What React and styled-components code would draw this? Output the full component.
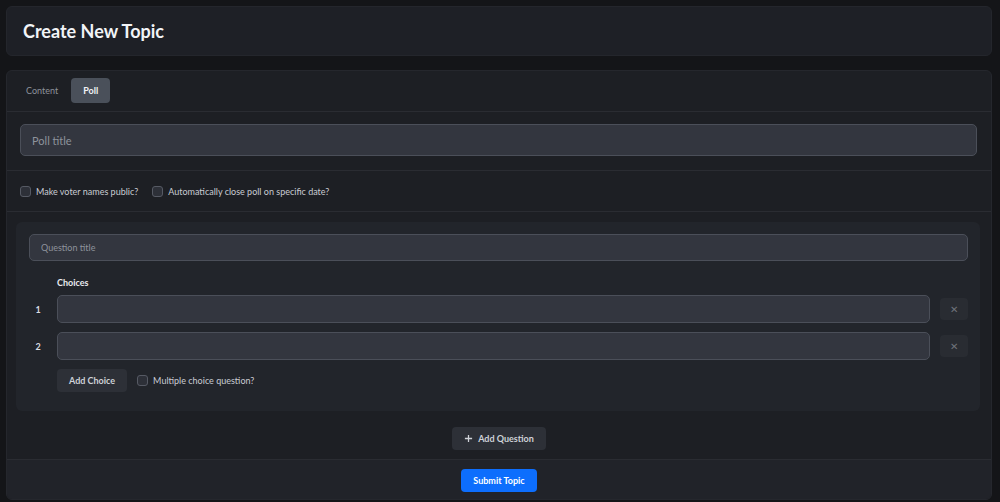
import React from "react";
import styled, { createGlobalStyle } from "styled-components";

const GlobalStyle = createGlobalStyle`
  html, body {
    margin: 0;
    padding: 0;
    background: #141518;
    font-family: "Lato", "Noto Sans", sans-serif;
    color: #e6e8ec;
  }
`;

const Page = styled.div`
  height: 502px;
  box-sizing: border-box;
  padding: 6px 8px 2px 6px;
  display: flex;
  flex-direction: column;
  gap: 14px;
`;

const Header = styled.header`
  height: 50px;
  flex: none;
  box-sizing: border-box;
  display: flex;
  align-items: center;
  padding: 0 16px;
  background: #1e2026;
  border: 1px solid #24262c;
  border-radius: 6px;
`;

const Title = styled.h1`
  margin: 0;
  font-size: 18px;
  font-weight: 700;
  color: #f2f4f7;
`;

const Card = styled.section`
  flex: 1;
  display: flex;
  flex-direction: column;
  background: #1d1f24;
  border: 1px solid #25272d;
  border-radius: 6px;
  overflow: hidden;
`;

const Tabs = styled.div`
  display: flex;
  align-items: center;
  gap: 6px;
  padding: 7px 13px 8px 12px;
  border-bottom: 1px solid #2a2c32;
`;

const Tab = styled.button`
  height: 25px;
  padding: 0 ${(p) => (p.active ? "12px" : "7px")};
  border: none;
  border-radius: 4px;
  font-family: inherit;
  font-size: 9px;
  font-weight: ${(p) => (p.active ? 700 : 400)};
  background: ${(p) => (p.active ? "#4a505a" : "transparent")};
  color: ${(p) => (p.active ? "#f1f3f6" : "#8d929b")};
`;

const Section = styled.div`
  padding: ${(p) => p.pad || "12px 14px 14px 13px"};
  border-bottom: ${(p) => (p.noBorder ? "none" : "1px solid #2a2c32")};
  display: flex;
  flex-direction: column;
  align-items: ${(p) => p.align || "stretch"};
`;

const Input = styled.input`
  box-sizing: border-box;
  width: 100%;
  height: ${(p) => p.h || 32}px;
  padding: 0 11px;
  background: #33363f;
  border: 1px solid #4b4f59;
  border-radius: 5px;
  font-family: inherit;
  font-size: ${(p) => p.fs || 11}px;
  color: #e6e8ec;
  outline: none;
  &::placeholder {
    color: #8e939c;
  }
`;

const CheckRow = styled.div`
  height: 40px;
  display: flex;
  align-items: center;
  gap: 14px;
  padding: 0 13px;
  border-bottom: 1px solid #2a2c32;
`;

const CheckLabel = styled.label`
  display: flex;
  align-items: center;
  gap: 5px;
  font-size: 9px;
  color: #c9ccd3;
`;

const Box = styled.span`
  width: 11px;
  height: 11px;
  box-sizing: border-box;
  border: 1px solid #565a64;
  border-radius: 3px;
  background: #2d3038;
`;

const QuestionArea = styled.div`
  padding: 10px 11px 0 9px;
  flex: none;
`;

const Question = styled.div`
  background: #22252b;
  border-radius: 6px;
  padding: 12px 12px 19px 13px;
  display: flex;
  flex-direction: column;
`;

const Choices = styled.div`
  display: grid;
  grid-template-columns: 18px 1fr 28px;
  column-gap: 10px;
  row-gap: 9px;
  align-items: center;
  margin-top: 16px;
`;

const ChoicesLabel = styled.div`
  grid-column: 2;
  font-size: 9px;
  font-weight: 700;
  color: #e9ebef;
  margin-bottom: -2px;
`;

const Num = styled.div`
  font-size: 9px;
  font-weight: 700;
  color: #d9dce2;
  text-align: center;
  grid-column: 1;
`;

const RemoveBtn = styled.button`
  width: 28px;
  height: 22px;
  border: none;
  border-radius: 4px;
  background: #292c32;
  color: #6f737b;
  font-size: 10px;
  display: flex;
  align-items: center;
  justify-content: center;
  padding: 0;
`;

const ChoiceFooter = styled.div`
  grid-column: 2 / 4;
  display: flex;
  align-items: center;
  gap: 10px;
`;

const GreyBtn = styled.button`
  height: 23px;
  padding: 0 12px;
  border: none;
  border-radius: 4px;
  background: #2d3037;
  color: #cfd2d8;
  font-family: inherit;
  font-size: 9px;
  font-weight: 700;
  display: flex;
  align-items: center;
  gap: 5px;
`;

const Footer = styled.div`
  flex: 1;
  background: #212329;
  display: flex;
  justify-content: center;
  padding-top: 9px;
`;

const SubmitBtn = styled.button`
  height: 23px;
  padding: 0 12px;
  border: none;
  border-radius: 4px;
  background: #0d6efd;
  color: #ffffff;
  font-family: inherit;
  font-size: 9px;
  font-weight: 700;
`;

const PlusIcon = () => (
  <svg width="9" height="9" viewBox="0 0 10 10">
    <path d="M5 1v8M1 5h8" stroke="#cfd2d8" strokeWidth="1.4" />
  </svg>
);

export default function App() {
  return (
    <>
      <GlobalStyle />
      <Page>
        <Header>
          <Title>Create New Topic</Title>
        </Header>
        <Card>
          <Tabs>
            <Tab>Content</Tab>
            <Tab active>Poll</Tab>
          </Tabs>
          <Section>
            <Input placeholder="Poll title" />
          </Section>
          <CheckRow>
            <CheckLabel>
              <Box /> Make voter names public?
            </CheckLabel>
            <CheckLabel>
              <Box /> Automatically close poll on specific date?
            </CheckLabel>
          </CheckRow>
          <QuestionArea>
            <Question>
              <Input h={27} fs={9} placeholder="Question title" />
              <Choices>
                <ChoicesLabel>Choices</ChoicesLabel>
                <Num>1</Num>
                <Input h={28} />
                <RemoveBtn>✕</RemoveBtn>
                <Num>2</Num>
                <Input h={28} />
                <RemoveBtn>✕</RemoveBtn>
                <ChoiceFooter>
                  <GreyBtn>Add Choice</GreyBtn>
                  <CheckLabel>
                    <Box /> Multiple choice question?
                  </CheckLabel>
                </ChoiceFooter>
              </Choices>
            </Question>
          </QuestionArea>
          <Section pad="16px 0 9px" align="center">
            <GreyBtn>
              <PlusIcon /> Add Question
            </GreyBtn>
          </Section>
          <Footer>
            <SubmitBtn>Submit Topic</SubmitBtn>
          </Footer>
        </Card>
      </Page>
    </>
  );
}
